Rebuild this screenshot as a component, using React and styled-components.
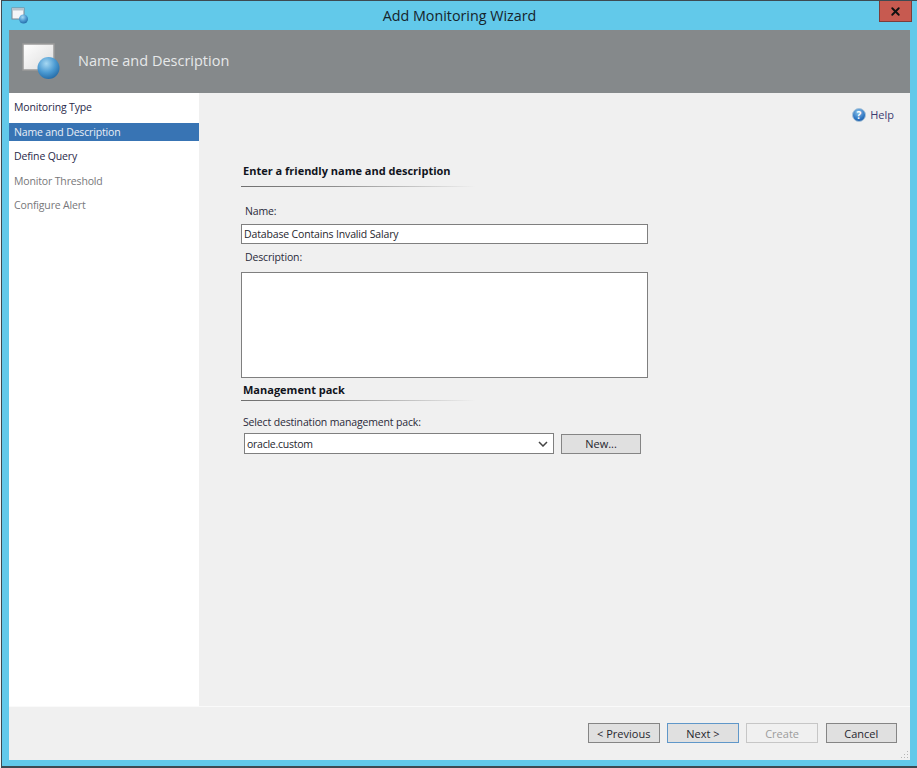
import React from "react";
import styled, { createGlobalStyle } from "styled-components";
import { X } from "lucide-react";

const GlobalStyle = createGlobalStyle`
  html, body {
    margin: 0;
    padding: 0;
    background: #f4f4f4;
  }
  * {
    box-sizing: border-box;
  }
`;

const Window = styled.div`
  width: 916px;
  height: 768px;
  margin-left: 1px;
  display: flex;
  flex-direction: column;
  background: #62c9ea;
  border-top: 1px solid #3d4a52;
  border-bottom: 2px solid #3d4a52;
  border-left: 1px solid #3d4a52;
  padding: 0 7px 6px 7px;
  font-family: "Open Sans", "Liberation Sans", sans-serif;
  font-size: 10.5px;
  letter-spacing: -0.15px;
  color: #1c1c2c;
`;

const TitleBar = styled.div`
  height: 29px;
  flex: none;
  display: flex;
  align-items: flex-start;
  justify-content: space-between;
  position: relative;
`;

const TitleIcon = styled.svg`
  width: 18px;
  height: 18px;
  margin: 6px 0 0 2px;
`;

const TitleText = styled.div`
  position: absolute;
  left: 0;
  right: 0;
  top: 5px;
  text-align: center;
  font-size: 14.3px;
  letter-spacing: 0;
  line-height: 20px;
  color: #16242c;
`;

const CloseButton = styled.div`
  width: 33px;
  height: 21px;
  margin-right: -2px;
  background: #c75a50;
  border: 1px solid #7c3d3a;
  border-top: none;
  display: flex;
  align-items: center;
  justify-content: center;
  color: #111;
`;

const Header = styled.div`
  height: 63px;
  flex: none;
  background: #85898b;
  display: flex;
  align-items: center;
  padding-left: 13px;
  gap: 18px;
`;

const HeaderTitle = styled.div`
  font-size: 14.5px;
  letter-spacing: 0;
  color: #e6e8e9;
  margin-top: -3px;
`;

const Body = styled.div`
  flex: 1;
  display: flex;
  min-height: 0;
`;

const Sidebar = styled.div`
  width: 190px;
  flex: none;
  background: #fff;
  padding-top: 5px;
  display: flex;
  flex-direction: column;
  gap: 6px;
`;

const NavItem = styled.div`
  height: 18.5px;
  line-height: 18px;
  padding-left: 5px;
  white-space: nowrap;
  color: ${(p) => (p.$active ? "#e8eef6" : p.$disabled ? "#77777a" : "#2a2a4a")};
  background: ${(p) => (p.$active ? "#3874b4" : "transparent")};
`;

const Content = styled.div`
  flex: 1;
  background: #f0f0f0;
  padding: 13px 0 0 42px;
  position: relative;
`;

const HelpLink = styled.div`
  position: absolute;
  top: 14px;
  right: 16px;
  display: flex;
  align-items: center;
  gap: 4px;
  font-size: 11px;
  letter-spacing: 0;
  color: #3d3d72;
`;

const SectionTitle = styled.div`
  font-weight: 700;
  font-size: 11px;
  letter-spacing: 0;
  line-height: 16px;
  color: #10141c;
  padding-left: 2px;
  margin-top: ${(p) => p.$top || 0}px;
  margin-bottom: ${(p) => p.$bottom || 0}px;
  white-space: nowrap;
`;

const SectionRule = styled.div`
  width: 235px;
  height: 1px;
  background: linear-gradient(to right, #6f6f6f, #8f8f8f 40%, #f0f0f0);
`;

const FormBlock = styled.div`
  width: 407px;
  display: flex;
  flex-direction: column;
  margin-top: 57px;
`;

const FieldLabel = styled.div`
  line-height: 16px;
  padding-left: ${(p) => p.$indent || 0}px;
  margin-top: ${(p) => p.$top || 0}px;
  color: #2a2a3a;
  white-space: nowrap;
`;

const TextInput = styled.div`
  width: 407px;
  height: 20px;
  background: #fff;
  border: 1px solid #7f7f7f;
  line-height: 18px;
  padding-left: 2px;
  margin-top: 5px;
  color: #26262e;
`;

const TextArea = styled.div`
  width: 407px;
  height: 106px;
  background: #fff;
  border: 1px solid #7f7f7f;
  margin-top: 7px;
`;

const PackRow = styled.div`
  display: flex;
  align-items: center;
  gap: 7px;
  margin: 3px 0 0 3px;
`;

const Select = styled.div`
  width: 310px;
  height: 21px;
  background: #fff;
  border: 1px solid #7f7f7f;
  display: flex;
  align-items: center;
  justify-content: space-between;
  padding: 0 5px 0 2px;
  letter-spacing: -0.25px;
  color: #26262e;
`;

const Button = styled.div`
  width: ${(p) => p.$width || 71.5}px;
  height: 20px;
  display: flex;
  align-items: center;
  justify-content: center;
  font-size: 11px;
  letter-spacing: 0;
  background: ${(p) => (p.$disabled ? "#f0f0f0" : "#e0e0e0")};
  border: 1px solid ${(p) => (p.$disabled ? "#c6c6c6" : p.$primary ? "#5f97c9" : "#858585")};
  color: ${(p) => (p.$disabled ? "#9c9c9c" : "#26262e")};
  white-space: nowrap;
`;

const Footer = styled.div`
  height: 54px;
  flex: none;
  background: #f0f0f0;
  border-top: 1px solid #fafafa;
  display: flex;
  justify-content: flex-end;
  align-items: flex-start;
  gap: 7.67px;
  padding: 16px 13px 0 0;
  position: relative;
`;

const Grip = styled.svg`
  position: absolute;
  right: 1px;
  bottom: 1px;
  width: 9px;
  height: 9px;
`;

const BallGradient = () => (
  <defs>
    <radialGradient id="ball" cx="40%" cy="30%" r="75%">
      <stop offset="0%" stopColor="#a6d8f2" />
      <stop offset="55%" stopColor="#4b9ad2" />
      <stop offset="100%" stopColor="#2268a4" />
    </radialGradient>
    <linearGradient id="page" x1="0" y1="0" x2="1" y2="1">
      <stop offset="0%" stopColor="#fff" />
      <stop offset="100%" stopColor="#dcdcdc" />
    </linearGradient>
    <radialGradient id="help" cx="45%" cy="30%" r="75%">
      <stop offset="0%" stopColor="#8cc4ea" />
      <stop offset="70%" stopColor="#2a72c0" />
      <stop offset="100%" stopColor="#1d5aa0" />
    </radialGradient>
  </defs>
);

const WizardIcon = ({ size }) => (
  <svg width={size} height={size} viewBox="0 0 38 38" style={{ flex: "none" }}>
    <rect x="1" y="1" width="31" height="26" fill="url(#page)" stroke="#9a9a9a" strokeWidth="1.5" />
    <circle cx="26.5" cy="25" r="11" fill="url(#ball)" />
  </svg>
);

export default function App() {
  return (
    <>
      <GlobalStyle />
      <Window>
        <svg width="0" height="0" style={{ position: "absolute" }}>
          <BallGradient />
        </svg>
        <TitleBar>
          <TitleIcon viewBox="0 0 18 18">
            <rect x="1" y="1" width="12" height="11" fill="#f4f6f8" stroke="#7b8791" />
            <rect x="1" y="1" width="12" height="2.5" fill="#b7c3cc" />
            <circle cx="12.5" cy="12" r="4.5" fill="url(#ball)" />
          </TitleIcon>
          <TitleText>Add Monitoring Wizard</TitleText>
          <CloseButton>
            <X size={13} strokeWidth={3.5} />
          </CloseButton>
        </TitleBar>
        <Header>
          <WizardIcon size={38} />
          <HeaderTitle>Name and Description</HeaderTitle>
        </Header>
        <Body>
          <Sidebar>
            <NavItem>Monitoring Type</NavItem>
            <NavItem $active>Name and Description</NavItem>
            <NavItem>Define Query</NavItem>
            <NavItem $disabled>Monitor Threshold</NavItem>
            <NavItem $disabled>Configure Alert</NavItem>
          </Sidebar>
          <Content>
            <HelpLink>
              <svg width="14" height="14" viewBox="0 0 14 14">
                <circle cx="7" cy="7" r="6.5" fill="url(#help)" stroke="#a9c4da" />
                <text x="7" y="10.5" textAnchor="middle" fontSize="10" fontWeight="700" fill="#fff" fontFamily="Open Sans, sans-serif">?</text>
              </svg>
              Help
            </HelpLink>
            <FormBlock>
              <SectionTitle $bottom={7}>Enter a friendly name and description</SectionTitle>
              <SectionRule />
              <FieldLabel $indent={4} $top={16}>Name:</FieldLabel>
              <TextInput>Database Contains Invalid Salary</TextInput>
              <FieldLabel $indent={4} $top={5}>Description:</FieldLabel>
              <TextArea />
              <SectionTitle $top={4} $bottom={2}>Management pack</SectionTitle>
              <SectionRule />
              <FieldLabel $indent={2} $top={13}>Select destination management pack:</FieldLabel>
              <PackRow>
                <Select>
                  oracle.custom
                  <svg width="10" height="6" viewBox="0 0 10 6">
                    <path d="M1 1l4 4 4-4" fill="none" stroke="#444" strokeWidth="1.5" />
                  </svg>
                </Select>
                <Button $width={80}>New...</Button>
              </PackRow>
            </FormBlock>
          </Content>
        </Body>
        <Footer>
          <Button>&lt; Previous</Button>
          <Button $primary>Next &gt;</Button>
          <Button $disabled>Create</Button>
          <Button>Cancel</Button>
          <Grip viewBox="0 0 9 9">
            <g fill="#b5b5b5">
              <rect x="7" y="1" width="1" height="1" />
              <rect x="4" y="4" width="1" height="1" />
              <rect x="7" y="4" width="1" height="1" />
              <rect x="1" y="7" width="1" height="1" />
              <rect x="4" y="7" width="1" height="1" />
              <rect x="7" y="7" width="1" height="1" />
            </g>
          </Grip>
        </Footer>
      </Window>
    </>
  );
}
